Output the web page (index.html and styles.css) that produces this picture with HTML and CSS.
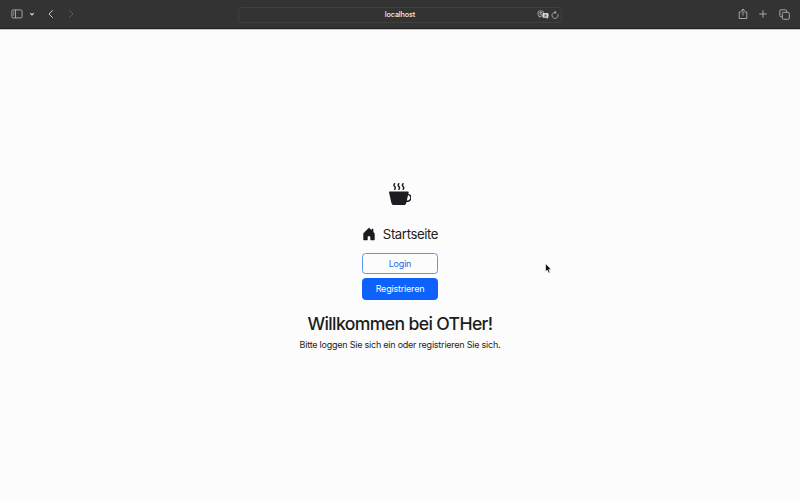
FILE: index.html
```html
<!DOCTYPE html>
<html lang="de">
<head>
<meta charset="utf-8">
<title>OTHer</title>
<link rel="stylesheet" href="styles.css">
</head>
<body>
<header class="toolbar">
  <div class="side left">
    <svg width="12" height="10" viewBox="0 0 12 10"><rect x=".9" y=".9" width="10.2" height="8" rx="1.3"/><path d="M4.5 1v8M2.2 2.8h1M2.2 4.4h1M2.2 6h1"/></svg>
    <svg class="chevron" width="6" height="10" viewBox="0 0 6 10"><path d="M1.3 4.2 3 5.9l1.7-1.7"/></svg>
    <svg class="back" width="8" height="10" viewBox="0 0 8 10"><path d="M5.8 1.2 2 5l3.8 3.8"/></svg>
    <svg class="forward" width="8" height="10" viewBox="0 0 8 10"><path d="M2.2 1.2 6 5 2.2 8.8"/></svg>
  </div>
  <div class="address">
    <span>localhost</span>
    <div class="tools">
      <svg width="12" height="10" viewBox="0 0 12 10"><path d="M6.5 4V2.5Q6.500 1 5 1H2.500Q1 1 1 2.500v2Q1 6 2.300 6v1.300L4 6h1M2.300 2.600h3M3.700 2.600q.2 2-1.200 2.500M3 3.200q.6 1.700 2 1.800"/><path class="solid" d="M6.700 3h3.500q1.300 0 1.300 1.300v2.200q0 1.300-1 1.300V9L9 7.800H6.700q-1.300 0-1.300-1.300V4.300Q5.400 3 6.700 3Z"/><path class="dark" d="m7.300 6.800 1.200-2.900 1.200 2.900M7.700 5.900h1.600"/></svg>
      <svg width="8" height="10" viewBox="0 0 8 10"><path d="M6.700 4.100A3 3 0 1 1 4 2.400h.8M3.600.8l1.500 1.600L3.600 4"/></svg>
    </div>
  </div>
  <div class="side right">
    <svg width="10" height="12" viewBox="0 0 10 12"><path d="M3.500 4H1.200v6.500h7.600V4H6.500M5 7.500V1M3.100 2.900 5 1l1.900 1.900"/></svg>
    <svg width="10" height="10" viewBox="0 0 10 10"><path d="M5 1.200v7.600M1.200 5h7.600"/></svg>
    <svg width="11" height="11" viewBox="0 0 11 11"><rect x="3.300" y="3.300" width="7" height="7" rx="1.200"/><path d="M3 7.700H2Q.8 7.700.8 6.500V2Q.8.800 2 .8h4.500Q7.700.8 7.700 2v1"/></svg>
  </div>
</header>
<main>
  <svg class="cup" viewBox="0 0 16 16"><path fill-rule="evenodd" d="M.5 6a.5.5 0 0 0-.488.608l1.652 7.434A2.500 2.500 0 0 0 4.104 16h5.792a2.500 2.500 0 0 0 2.440-1.958l.131-.59a3 3 0 0 0 1.300-5.854l.221-.99A.5.5 0 0 0 13.500 6zM13 12.500a2 2 0 0 1-.316-.025l.867-3.898A2.001 2.001 0 0 1 13 12.500"/><path id="steam" d="m4.400.8-.003.004-.014.019a4 4 0 0 0-.204.31 2 2 0 0 0-.141.267c-.026.06-.034.092-.037.103v.004a.6.6 0 0 0 .091.248c.075.133.178.272.308.445l.01.012c.118.158.26.347.37.543.112.2.22.455.22.745 0 .188-.065.368-.119.494a3 3 0 0 1-.202.388 5 5 0 0 1-.253.382l-.025.035A.5.5 0 0 1 3.600 4.200l.003-.004.014-.019a4 4 0 0 0 .204-.31 2 2 0 0 0 .141-.267c.026-.06.034-.092.037-.103a.6.6 0 0 0-.09-.252A4 4 0 0 0 3.600 2.800l-.01-.012a5 5 0 0 1-.37-.543A1.530 1.530 0 0 1 3 1.500c0-.188.065-.368.119-.494.059-.138.134-.274.202-.388a6 6 0 0 1 .253-.382l.025-.035A.5.5 0 0 1 4.400.8"/><use href="#steam" x="3"/><use href="#steam" x="6"/></svg>
  <a class="home"><svg viewBox="0 0 16 16"><path d="M6.500 14.500v-3.505c0-.245.25-.495.5-.495h2c.25 0 .5.25.5.5v3.500a.5.5 0 0 0 .5.5h4a.5.5 0 0 0 .5-.5v-7a.5.5 0 0 0-.146-.354L13 5.793V2.500a.5.5 0 0 0-.5-.5h-1a.5.5 0 0 0-.5.5v1.293L8.354 1.146a.5.5 0 0 0-.708 0l-6 6A.5.5 0 0 0 1.500 7.500v7a.5.5 0 0 0 .5.5h4a.5.5 0 0 0 .5-.5"/></svg><span>Startseite</span></a>
  <div class="actions">
    <button class="btn outline">Login</button>
    <button class="btn primary">Registrieren</button>
  </div>
  <h1>Willkommen bei OTHer!</h1>
  <p>Bitte loggen Sie sich ein oder registrieren Sie sich.</p>
</main>
<svg class="cursor" width="7" height="11" viewBox="0 0 7 11"><path d="M.7.700v7.800l1.700-1.500 1.300 3 1.300-.6-1.300-2.900h2.400z"/></svg>
</body>
</html>
```
FILE: styles.css
```css
* { box-sizing: border-box; }
body {
  margin: 0;
  height: 500px;
  overflow: hidden;
  display: flex;
  flex-direction: column;
  background: #fcfcfc;
  color: #1c1d20;
  font-family: Inter, "Liberation Sans", sans-serif;
}
svg { display: block; flex: none; }
.toolbar {
  flex: none;
  height: 29px;
  display: grid;
  grid-template-columns: 1fr 324px 1fr;
  align-items: center;
  background: #333;
  border-bottom: 1px solid #222;
  box-shadow: 0 1px 0 #c9c3c5;
}
.toolbar svg { fill: none; stroke: #b0b0b0; stroke-width: 0.9; }
.side { display: flex; align-items: center; }
.left { padding-left: 11px; }
.toolbar .chevron { margin-left: 6px; stroke: #ddd; stroke-width: 1.1; }
.toolbar .back { margin-left: 12px; stroke: #c8c8c8; stroke-width: 1; }
.toolbar .forward { margin-left: 12px; stroke: #606060; }
.right { justify-content: flex-end; gap: 11px; padding-right: 10px; }
.right svg:first-child { margin-right: -1px; }
.address {
  height: 16px;
  margin-top: 1px;
  display: grid;
  grid-template-columns: 1fr auto 1fr;
  align-items: center;
  border: 1px solid #3f3f3f;
  border-radius: 4px;
  color: #eee;
  font-size: 7.2px;
  font-weight: 500;
  letter-spacing: -0.1px;
}
.address span { grid-column: 2; }
.tools { display: flex; justify-content: flex-end; gap: 2px; padding-right: 2px; }
.toolbar .solid { fill: #ddd; stroke: none; }
.toolbar .dark { stroke: #444; stroke-width: 0.6; }
main {
  display: flex;
  flex-direction: column;
  align-items: center;
  padding-top: 153.5px;
}
.cup { width: 22.5px; height: 22.5px; fill: #1c1d20; }
.home {
  display: flex;
  align-items: center;
  gap: 7px;
  margin-top: 20px;
  font-size: 13.2px;
  line-height: 18px;
  letter-spacing: -0.4px;
}
.home svg { width: 14px; height: 14px; fill: #181b1f; }
.actions {
  width: 76px;
  margin-top: 9.5px;
  display: flex;
  flex-direction: column;
  gap: 4px;
}
.btn {
  height: 21.5px;
  padding: 0;
  border: 1px solid #5a98f0;
  border-radius: 3.5px;
  font: 9px/19px Inter, "Liberation Sans", sans-serif;
  letter-spacing: -0.2px;
}
.outline { background: transparent; color: #176ae6; }
.primary { background: #0d62fb; border-color: #0d62fb; color: #fff; }
h1 {
  margin: 13px 0 0;
  font-size: 17.6px;
  font-weight: 500;
  line-height: 22px;
  letter-spacing: -0.63px;
}
p {
  margin: 3px 0 0;
  font-size: 9px;
  line-height: 14px;
  letter-spacing: -0.23px;
}
.cursor {
  position: absolute;
  left: 545px;
  top: 263px;
  fill: #000;
  stroke: #fff;
  stroke-width: 0.5;
}
```
